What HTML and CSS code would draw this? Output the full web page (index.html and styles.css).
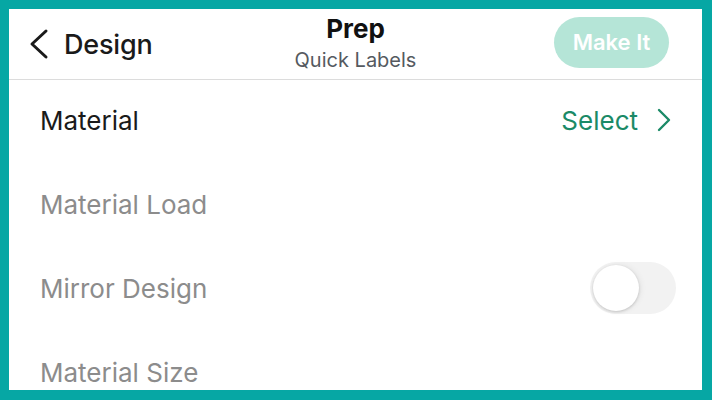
FILE: index.html
```
<!DOCTYPE html>
<html lang="en">
<head>
    <meta charset="UTF-8">
    <meta name="viewport" content="width=device-width, initial-scale=1.0">
    <title>Prep</title>
    <link rel="stylesheet" href="styles.css">
</head>
<body>
<div class="screen">
    <header class="top-bar">
        <a class="back-link" href="#">
            <svg class="back-icon" width="20" height="32" viewBox="0 0 20 32">
                <path d="M17 3 L3 16 L17 29" fill="none" stroke="#1a1a1a" stroke-width="3" stroke-linecap="round" stroke-linejoin="round"/>
            </svg>
            <span>Design</span>
        </a>
        <div class="title-block">
            <div class="title">Prep</div>
            <div class="subtitle">Quick Labels</div>
        </div>
        <button class="make-btn">Make It</button>
    </header>

    <ul class="settings">
        <li class="setting-row">
            <span class="setting-label active">Material</span>
            <a class="select-link" href="#">
                Select
                <svg width="16" height="24" viewBox="0 0 16 24">
                    <path d="M3 2 L13 12 L3 22" fill="none" stroke="#1b8a67" stroke-width="2.4" stroke-linecap="round" stroke-linejoin="round"/>
                </svg>
            </a>
        </li>
        <li class="setting-row">
            <span class="setting-label">Material Load</span>
        </li>
        <li class="setting-row">
            <span class="setting-label">Mirror Design</span>
            <span class="toggle"><span class="knob"></span></span>
        </li>
        <li class="setting-row">
            <span class="setting-label">Material Size</span>
        </li>
    </ul>
</div>
</body>
</html>
```

FILE: styles.css
```
html, body {
    margin: 0;
    padding: 0;
    height: 100%;
}

body {
    font-family: Inter, 'Open Sans', sans-serif;
    background-color: #06a7a4;
    padding: 9px 10px 10px 9px;
    box-sizing: border-box;
    overflow: hidden;
}

.screen {
    background: #ffffff;
    height: 100%;
    overflow: hidden;
}

.top-bar {
    height: 70px;
    border-bottom: 1px solid #dcdcdc;
    display: flex;
    align-items: center;
    justify-content: space-between;
    padding: 0 33px 0 20px;
    position: relative;
}

.back-link {
    display: flex;
    align-items: center;
    gap: 15px;
    text-decoration: none;
    color: #1a1a1a;
    font-size: 27px;
    font-weight: 500;
    letter-spacing: -0.2px;
}

.back-icon {
    display: block;
}

/* 标题居中 */
.title-block {
    position: absolute;
    left: 0;
    right: 0;
    top: 4px;
    text-align: center;
    pointer-events: none;
}

.title {
    font-size: 26px;
    font-weight: 700;
    color: #111;
    line-height: 32px;
}

.subtitle {
    font-size: 20px;
    color: #555a60;
    line-height: 24px;
    margin-top: 3px;
}

.make-btn {
    background: #b5e5d7;
    color: #ffffff;
    border: none;
    border-radius: 26px;
    width: 115px;
    height: 51px;
    font-family: inherit;
    font-size: 22px;
    font-weight: 600;
    margin-top: -4px;
}

.settings {
    list-style: none;
    margin: 0;
    padding: 0;
}

.setting-row {
    height: 84px;
    display: flex;
    align-items: center;
    justify-content: space-between;
    padding: 0 26px 0 31px;
    margin-top: -2px;
    margin-bottom: 2px;
}

.setting-label {
    font-size: 26px;
    color: #8c8c8c;
}

.setting-label.active {
    color: #1a1a1a;
}

.select-link {
    display: flex;
    align-items: center;
    gap: 18px;
    color: #1b8a67;
    text-decoration: none;
    font-size: 26px;
    margin-right: 4px;
}

.toggle {
    width: 86px;
    height: 52px;
    border-radius: 26px;
    background: #f2f2f2;
    display: flex;
    align-items: center;
    padding: 3px;
    box-sizing: border-box;
}

.knob {
    width: 46px;
    height: 46px;
    border-radius: 50%;
    background: #ffffff;
    box-shadow: 0 1px 3px rgba(0, 0, 0, 0.18), 2px 0 6px rgba(0, 0, 0, 0.06);
}
```
